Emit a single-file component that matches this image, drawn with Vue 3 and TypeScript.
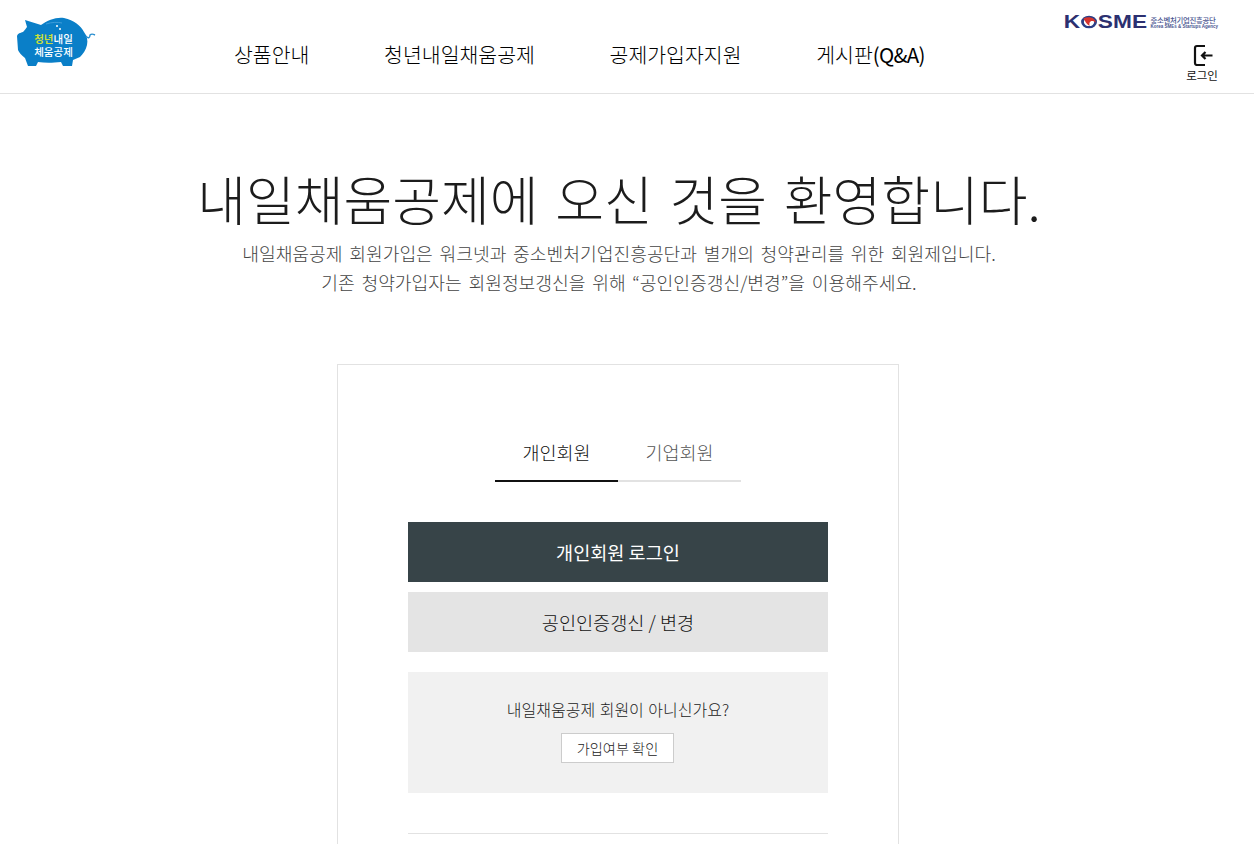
<script setup lang="ts">
const navItems: { label: string; suffix?: string }[] = [
  { label: '상품안내' },
  { label: '청년내일채움공제' },
  { label: '공제가입자지원' },
  { label: '게시판', suffix: '(Q&A)' },
]
</script>

<template>
  <div class="page">
    <header class="header">
      <a class="logo" aria-label="청년내일채움공제">
        <svg class="pig" width="80" height="52" viewBox="17 17 80 52">
          <path d="M25 20 L41 25 C48 20 56 17 64 18 C74 20 81 26 84 32 C87 36 88 40 87 45 C86 50 83 54 80 57 L73 60 L72 66 L63 66 L61 62 C52 63 45 63 38 62 L36 66 L28 66 L25 58 C21 55 19 52 18 50 L17 36 C18 33 20 33 23 32 C25 30 26 28 27 27 Z" fill="#0a7fc8" />
          <path d="M86 36 C88 39 90 38 90 35 C91 34 93 34 95 35" fill="none" stroke="#2a8fd0" stroke-width="1.4" />
          <path d="M46 24 C52 22 58 22 62 23" fill="none" stroke="#4aa3dc" stroke-width="0.8" />
          <circle cx="57" cy="26" r="1" fill="#fff" />
          <circle cx="60" cy="29" r="1" fill="#fff" />
        </svg>
        <span class="pig-text"><span><b>청년</b>내일</span><span>체움공제</span></span>
      </a>
      <nav class="nav">
        <a v-for="item in navItems" :key="item.label" class="nav-item">{{ item.label }}<span v-if="item.suffix" class="nav-suffix">{{ item.suffix }}</span></a>
      </nav>
      <div class="util">
        <div class="kosme">
          <span class="kosme-mark">K<svg width="14" height="14" viewBox="0 0 14 14"><circle cx="7" cy="7" r="5.200" fill="none" stroke="#2c3f86" stroke-width="2.200" /><path d="M2.500 3.500 C7 0.500 12 3 12.500 7.500 C10 5 6.500 5 7.500 11 C5 9.500 4 6 2.500 3.500 Z" fill="#d7342c" /></svg>SME</span>
          <span class="kosme-sub"><span class="ko">중소벤처기업진흥공단</span><span class="en">Korea SMEs &amp; Startups Agency</span></span>
        </div>
        <a class="login">
          <svg width="22" height="22" viewBox="0 0 22 22" fill="none" stroke="#111" stroke-width="2.200">
            <path d="M13 2 H5 Q3 2 3 4 V19 Q3 21 5 21 H13" />
            <path d="M20.500 11.500 H10 M13.500 8 L10 11.500 L13.500 15" />
          </svg>
          <span>로그인</span>
        </a>
      </div>
    </header>

    <main class="main">
      <h1 class="title">내일채움공제에 오신 것을 환영합니다.</h1>
      <p class="lead">내일채움공제 회원가입은 워크넷과 중소벤처기업진흥공단과 별개의 청약관리를 위한 회원제입니다.<br />기존 청약가입자는 회원정보갱신을 위해 “공인인증갱신/변경”을 이용해주세요.</p>

      <section class="card">
        <div class="tabs">
          <a class="tab active">개인회원</a>
          <a class="tab">기업회원</a>
        </div>
        <button class="btn dark">개인회원 로그인</button>
        <button class="btn gray">공인인증갱신 / 변경</button>
        <div class="notice">
          <p>내일채움공제 회원이 아니신가요?</p>
          <button class="check">가입여부 확인</button>
        </div>
        <hr class="rule" />
      </section>
    </main>
  </div>
</template>

<style>
html, body { margin: 0; background: #fff; overflow: hidden; }
</style>

<style scoped>
.page {
  width: 1254px;
  height: 844px;
  overflow: hidden;
  font-family: "Noto Sans CJK KR", "Noto Sans", sans-serif;
  font-weight: 300;
  color: #111;
}
.header {
  height: 93px;
  border-bottom: 1px solid #e2e2e2;
  display: flex;
  position: relative;
}
.logo {
  position: relative;
  width: 80px;
  height: 52px;
  margin: 17px 0 0 17px;
  flex: none;
}
.pig { display: block; }
.pig-text {
  position: absolute;
  left: 17px;
  top: 15px;
  width: 39px;
  display: flex;
  flex-direction: column;
  align-items: center;
  color: #fff;
  font-size: 10.500px;
  line-height: 13px;
  font-weight: 500;
  white-space: nowrap;
}
.pig-text b { color: #c9de3a; font-weight: 700; }
.nav {
  display: flex;
  gap: 74.600px;
  margin: 39px 0 0 137px;
  height: 30px;
}
.nav-item {
  font-size: 20.500px;
  line-height: 30px;
  white-space: nowrap;
  font-weight: 300;
  color: #000;
}
.nav-suffix {
  font-weight: 400;
  letter-spacing: -0.700px;
}
.util {
  position: absolute;
  right: 36px;
  top: 13px;
  display: flex;
  flex-direction: column;
  align-items: flex-end;
}
.kosme {
  display: flex;
  align-items: center;
  gap: 3px;
  height: 18px;
}
.kosme-mark {
  display: flex;
  align-items: center;
  font-family: "Liberation Sans", sans-serif;
  font-weight: 700;
  font-size: 18px;
  line-height: 18px;
  color: #2c3070;
  transform: scaleX(1.260);
  transform-origin: right center;
}
.kosme-sub {
  display: flex;
  flex-direction: column;
  color: #4a5590;
  white-space: nowrap;
}
.ko { font-size: 7.400px; line-height: 9px; letter-spacing: -0.300px; font-weight: 500; }
.en { font-size: 4.500px; line-height: 6px; font-weight: 700; font-family: "Liberation Sans", sans-serif; }
.login {
  display: flex;
  flex-direction: column;
  align-items: center;
  margin: 13px 0 0;
  width: 32px;
  font-size: 11.500px;
  line-height: 16px;
  font-weight: 400;
  white-space: nowrap;
}
.login svg { display: block; margin-bottom: 1px; margin-left: 2px; }
.main {
  display: flex;
  flex-direction: column;
  align-items: center;
  width: 1238px;
}
.title {
  margin: 65px 0 0;
  font-size: 53px;
  line-height: 78px;
  font-weight: 300;
  word-spacing: 5px;
  color: #1c1c1c;
  white-space: nowrap;
}
.lead {
  margin: 2px 0 0;
  font-size: 18.200px;
  line-height: 29px;
  word-spacing: 2.600px;
  color: #444;
  text-align: center;
  white-space: nowrap;
}
.card {
  box-sizing: border-box;
  width: 562px;
  height: 600px;
  margin: 67px 2px 0 0;
  border: 1px solid #e2e2e2;
  padding: 57px 70px 0;
  display: flex;
  flex-direction: column;
  flex: none;
}
.tabs {
  display: flex;
  justify-content: center;
  margin-bottom: 40px;
}
.tab {
  width: 123px;
  height: 60px;
  box-sizing: border-box;
  border-bottom: 2px solid #e2e2e2;
  text-align: center;
  font-size: 18.500px;
  line-height: 60px;
  color: #555;
}
.tab.active { color: #111; border-bottom-color: #111; }
.btn {
  border: 0;
  width: 420px;
  height: 60px;
  font-family: inherit;
  font-size: 18.600px;
  font-weight: 400;
  padding: 0 0 2px;
}
.dark { background: #374448; color: #fff; margin-bottom: 10px; }
.gray { background: #e4e4e4; color: #111; font-weight: 300; }
.notice {
  margin-top: 20px;
  height: 121px;
  background: #f1f1f1;
  text-align: center;
  padding-top: 25px;
  box-sizing: border-box;
}
.notice p {
  margin: 0;
  font-size: 16px;
  line-height: 24px;
  word-spacing: 1px;
  color: #222;
}
.check {
  display: block;
  margin: 12px 0 0 153px;
  width: 113px;
  height: 30px;
  background: #fff;
  border: 1px solid #ccc;
  padding: 0;
  font-family: inherit;
  font-size: 14.200px;
  font-weight: 300;
  color: #222;
}
.rule {
  margin: 40px 0 0;
  border: 0;
  border-top: 1px solid #e2e2e2;
}
</style>
